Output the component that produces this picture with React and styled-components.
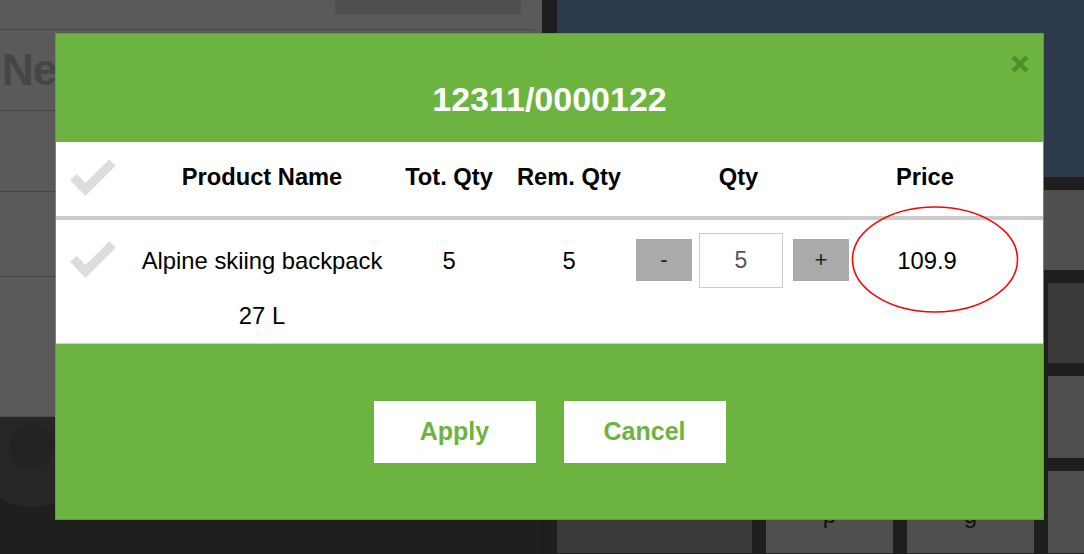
import React from 'react'
import styled, { createGlobalStyle } from 'styled-components'

const GREEN = '#6cb33f'
const FONT = `'Liberation Sans', Arial, Helvetica, sans-serif`

const GlobalStyle = createGlobalStyle`
  html, body {
    margin: 0;
    padding: 0;
    background: #1e1e1e;
  }
  body {
    font-family: ${FONT};
  }
`

const rows = [
  {
    id: 1,
    name: 'Alpine skiing backpack 27 L',
    total: 5,
    remaining: 5,
    qty: 5,
    price: '109.9',
  },
]

function Check() {
  return (
    <CheckIcon viewBox='0 0 46 38' aria-hidden='true'>
      <polyline
        points='3.5,17 15.5,29.5 42.5,2.5'
        fill='none'
        stroke='#dcdcdc'
        strokeWidth='9'
        strokeLinejoin='miter'
      />
    </CheckIcon>
  )
}

function CloseIcon() {
  return (
    <svg width='18' height='18' viewBox='0 0 18 18' aria-hidden='true'>
      <path d='M2 2 L16 16 M16 2 L2 16' stroke='#4f8f2c' strokeWidth='4.5' />
    </svg>
  )
}

function App() {
  return (
    <>
      <GlobalStyle />
      <Page>
        <LeftPane>
          <ListPanel>
            <TopBar>
              <SearchStub />
            </TopBar>
            <ListRow>
              <ListTitle>New</ListTitle>
            </ListRow>
            <ListRow />
            <ListRow tall />
          </ListPanel>
          <LogoArea>
            <Ring />
          </LogoArea>
        </LeftPane>

        <RightPane>
          <NavyHeader />
          <TileGrid>
            <Tile wide />
            <Tile tone='#393939' />
            <Tile />
            <Tile />
            <Tile tone='#393939' />
            <Tile tone='#3d3d3d' />
            <Tile />
            <Tile />
            <Tile />
            <Tile tone='#3a3a3a' />
            <Tile>
              <TileLabel>p</TileLabel>
            </Tile>
            <Tile>
              <TileLabel>g</TileLabel>
            </Tile>
            <Tile />
          </TileGrid>
        </RightPane>

        <Modal>
          <CloseButton>
            <CloseIcon />
          </CloseButton>
          <ModalHeader>
            <Title>12311/0000122</Title>
          </ModalHeader>

          <Table>
            <HeadRow>
              <Cell>
                <Check />
              </Cell>
              <HeadCell>Product Name</HeadCell>
              <HeadCell>Tot. Qty</HeadCell>
              <HeadCell>Rem. Qty</HeadCell>
              <HeadCell shift={-4}>Qty</HeadCell>
              <HeadCell shift={-2}>Price</HeadCell>
            </HeadRow>

            {rows.map((row) => (
              <BodyRow key={row.id}>
                <Cell>
                  <Check />
                </Cell>
                <TextCell>{row.name}</TextCell>
                <TextCell>{row.total}</TextCell>
                <TextCell>{row.remaining}</TextCell>
                <Cell>
                  <Stepper>
                    <StepButton>-</StepButton>
                    <QtyInput value={row.qty} readOnly />
                    <StepButton>+</StepButton>
                  </Stepper>
                </Cell>
                <PriceCell>
                  {row.price}
                  <Highlight viewBox='0 0 170 108' aria-hidden='true'>
                    <ellipse
                      cx='84'
                      cy='53.5'
                      rx='82.5'
                      ry='52.5'
                      fill='none'
                      stroke='#f00'
                      strokeWidth='1.6'
                    />
                  </Highlight>
                </PriceCell>
              </BodyRow>
            ))}
          </Table>

          <ModalFooter>
            <ActionButton>Apply</ActionButton>
            <ActionButton>Cancel</ActionButton>
          </ModalFooter>
        </Modal>
      </Page>
    </>
  )
}

const Page = styled.div`
  position: relative;
  display: grid;
  grid-template-columns: 542px 1fr;
  column-gap: 15px;
  width: 1084px;
  height: 554px;
  overflow: hidden;
  background: #1e1e1e;
`

const LeftPane = styled.div`
  display: grid;
  grid-template-rows: 417px 1fr;
`

const ListPanel = styled.div`
  background: #5a5a5a;
  border-bottom: 1px solid #4c4c4c;
`

const TopBar = styled.div`
  display: flex;
  justify-content: flex-end;
  height: 29px;
  padding-right: 13px;
  margin-right: 8px;
  border-bottom: 1px solid #484848;
`

const SearchStub = styled.div`
  width: 186px;
  height: 14px;
  background: #505050;
`

const ListRow = styled.div`
  display: flex;
  align-items: center;
  height: ${(p) => (p.tall ? 84 : 80)}px;
  border-bottom: 1px solid #464646;
  padding-left: 2px;
`

const ListTitle = styled.span`
  font-family: ${FONT};
  font-weight: 700;
  font-size: 44px;
  color: #464646;
  letter-spacing: -1px;
`

const LogoArea = styled.div`
  position: relative;
  overflow: hidden;
  background: #1f1f1f;
`

const Ring = styled.div`
  position: absolute;
  left: -28px;
  top: -30px;
  width: 120px;
  height: 120px;
  box-sizing: border-box;
  border-radius: 50%;
  border: 38px solid #262626;
  background: #222;
`

const RightPane = styled.div`
  display: grid;
  grid-template-rows: 177px 1fr;
`

const NavyHeader = styled.div`
  background: #2d3a4c;
`

const TileGrid = styled.div`
  display: grid;
  grid-template-columns: 195px 127px 127px 1fr;
  grid-template-rows: 80px 80px 82px 82px;
  column-gap: 14px;
  row-gap: 13px;
  padding-top: 13px;
`

const Tile = styled.div`
  grid-column: ${(p) => (p.wide ? '1 / -1' : 'auto')};
  display: flex;
  align-items: flex-end;
  justify-content: center;
  background: ${(p) => p.tone || '#4f4f4f'};
`

const TileLabel = styled.span`
  font-family: ${FONT};
  font-size: 24px;
  line-height: 1;
  color: #111;
  margin-bottom: 26px;
`

const Modal = styled.div`
  position: absolute;
  left: 55px;
  top: 33px;
  width: 987px;
  height: 485px;
  display: flex;
  flex-direction: column;
  background: ${GREEN};
  border: 1px solid #5d9f35;
  font-family: ${FONT};
`

const CloseButton = styled.div`
  position: absolute;
  top: 21px;
  right: 14px;
  width: 18px;
  height: 18px;
  cursor: pointer;
`

const ModalHeader = styled.div`
  height: 108px;
  box-sizing: border-box;
  padding-top: 45px;
  text-align: center;
`

const Title = styled.h2`
  margin: 0;
  font-size: 34px;
  line-height: 40px;
  font-weight: 700;
  color: #fff;
`

const Table = styled.div`
  background: #fff;
  border-bottom: 1px solid #cfcfcf;
`

const Row = styled.div`
  display: grid;
  grid-template-columns: 74px 264px 110px 130px 217px 152px 1fr;
  color: #000;
  font-size: 24px;
`

const HeadRow = styled(Row)`
  height: 74px;
  align-items: center;
  border-bottom: 4px solid #cccccc;
`

const BodyRow = styled(Row)`
  align-items: start;
  padding-top: 13px;
  line-height: 55px;
  min-height: 110px;
`

const Cell = styled.div`
  display: flex;
  justify-content: center;
  align-items: center;
  min-height: 55px;
`

const HeadCell = styled.div`
  position: relative;
  top: -2px;
  left: ${(p) => p.shift || 0}px;
  text-align: center;
  font-weight: 700;
  font-size: 23.7px;
`

const TextCell = styled.div`
  text-align: center;
  font-size: 23.8px;
`

const PriceCell = styled(TextCell)`
  position: relative;
`

const Highlight = styled.svg`
  position: absolute;
  left: 0;
  top: -27px;
  width: 170px;
  height: 108px;
  pointer-events: none;
`

const CheckIcon = styled.svg`
  width: 46px;
  height: 38px;
`

const Stepper = styled.div`
  display: flex;
  align-items: center;
  margin-top: -1px;
`

const StepButton = styled.button`
  width: 56px;
  height: 42px;
  border: 0;
  padding: 0;
  background: #aaaaaa;
  color: #222;
  font-family: ${FONT};
  font-size: 22px;
  line-height: 42px;
`

const QtyInput = styled.input`
  box-sizing: border-box;
  width: 84px;
  height: 55px;
  margin: 0 10px 0 7px;
  border: 1px solid #cccccc;
  padding: 0;
  text-align: center;
  color: #555;
  font-family: ${FONT};
  font-size: 23px;
  outline: none;
`

const ModalFooter = styled.div`
  flex: 1;
  display: flex;
  justify-content: center;
  align-items: center;
  gap: 28px;
`

const ActionButton = styled.button`
  width: 162px;
  height: 62px;
  border: 0;
  background: #fff;
  color: ${GREEN};
  font-family: ${FONT};
  font-size: 25px;
  font-weight: 700;
  cursor: pointer;
`

export default App
